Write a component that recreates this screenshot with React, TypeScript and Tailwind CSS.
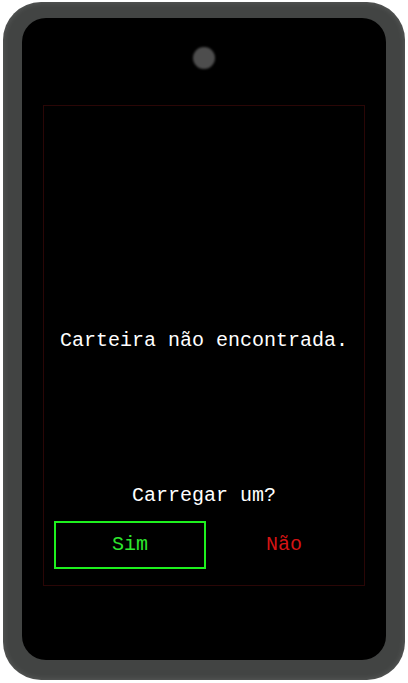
import React from 'react';

const App: React.FC = () => {
  return (
    <div className="w-[408px] h-[683px] bg-white pt-[2px] pl-[3px]">
      {/* Device frame */}
      <div className="w-[402px] h-[678px] rounded-[38px] bg-[#424443] pt-[16px] pl-[19px] pr-[19px] pb-[20px] shadow-[inset_0_0_6px_rgba(255,255,255,0.15)]">
        <div className="relative h-full w-full rounded-[24px] bg-black pt-[29px] px-[21px]">
          {/* Camera */}
          <div className="mx-auto h-[22px] w-[22px] rounded-full bg-[#4d4d4d] blur-[1px]" />

          {/* Screen area */}
          <div
            className="mt-[36px] h-[481px] border border-[#2a0606] flex flex-col text-[20px] leading-[24px] text-white"
            style={{ fontFamily: '"Liberation Mono", "DejaVu Sans Mono", monospace' }}
          >
            <p className="mt-[223px] text-center">Carteira não encontrada.</p>
            <p className="mt-[131px] text-center">Carregar um?</p>
            <div className="mt-[13px] flex gap-[2px] pl-[10px]">
              <button className="w-[152px] h-[48px] border-2 border-[#1ef01e] text-[#2ee62e]">
                Sim
              </button>
              <button className="w-[152px] h-[48px] text-[#d41414]">Não</button>
            </div>
          </div>
        </div>
      </div>
    </div>
  );
};

export default App;
